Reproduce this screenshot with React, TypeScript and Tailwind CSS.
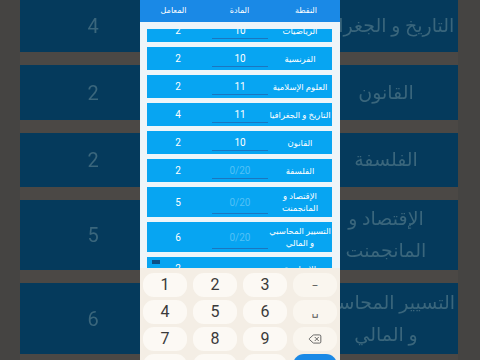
import React from "react";
import { Delete } from "lucide-react";

type Row = { n: string; v: string; s: string[]; ph?: boolean };

const rows: Row[] = [
  { n: "2", v: "10", s: ["الرياضيات"] },
  { n: "2", v: "10", s: ["الفرنسية"] },
  { n: "2", v: "11", s: ["العلوم الإسلامية"] },
  { n: "4", v: "11", s: ["التاريخ و الجغرافيا"] },
  { n: "2", v: "10", s: ["القانون"] },
  { n: "2", v: "0/20", s: ["الفلسفة"], ph: true },
  { n: "5", v: "0/20", s: ["الإقتصاد و", "المانجمنت"], ph: true },
  { n: "6", v: "0/20", s: ["التسيير المحاسبي", "و المالي"], ph: true },
  { n: "2", v: "", s: ["الإنجليزية"], ph: true },
];

const bgRows: { n: string; s: string[]; h: string }[] = [
  { n: "4", s: ["التاريخ و الجغرافيا"], h: "h-[52px]" },
  { n: "2", s: ["القانون"], h: "h-[55px]" },
  { n: "2", s: ["الفلسفة"], h: "h-[54px]" },
  { n: "5", s: ["الإقتصاد و", "المانجمنت"], h: "h-[70px]" },
  { n: "6", s: ["التسيير المحاسبي", "و المالي"], h: "h-[71px]" },
  { n: "2", s: ["الإنجليزية"], h: "h-[55px]" },
];

const font = { fontFamily: "Roboto, 'DejaVu Sans', sans-serif" };

function LeftBg() {
  return (
    <div className="w-[140px] h-[360px] flex bg-[#454442] overflow-hidden">
      <div className="w-[20px] shrink-0" />
      <div className="flex-1 flex flex-col gap-[13px] bg-[#4b4845]">
        {bgRows.map((r, i) => (
          <div key={i} className={`${r.h} shrink-0 bg-[#053a5c] flex items-center pl-[63px]`}>
            <span className="w-[20px] text-center text-[20px] text-[#3a667c] blur-[0.7px]">{r.n}</span>
          </div>
        ))}
      </div>
    </div>
  );
}

function RightBg() {
  return (
    <div className="w-[140px] h-[360px] flex bg-[#454442] overflow-hidden">
      <div className="w-[118px] shrink-0 flex flex-col gap-[13px] bg-[#4b4845]">
        {bgRows.map((r, i) => (
          <div key={i} className={`${r.h} shrink-0 bg-[#053a5c] overflow-hidden flex items-center`}>
            <div className="w-[200px] -ml-[54px] shrink-0 text-center text-[19px] leading-[32px] text-[#3a667c] blur-[0.7px] whitespace-nowrap" dir="rtl">
              {r.s.map((t, j) => (
                <div key={j}>{t}</div>
              ))}
            </div>
          </div>
        ))}
      </div>
      <div className="flex-1" />
    </div>
  );
}

function Card({ r, idx }: { r: Row; idx: number }) {
  const two = r.s.length > 1;
  return (
    <div className={`${two ? "h-[30px]" : "h-[23px]"} shrink-0 bg-[#07a5f2] flex items-center relative`}>
      <div className="w-[62px] text-center text-[10px] text-white">{r.n}</div>
      <div className="ml-[3px] w-[56px] h-full flex flex-col justify-center relative">
        <div className={`text-center text-[10px] ${r.ph ? "text-[#52c1f6]" : "text-white"}`}>{r.v}</div>
        <div className="absolute left-0 right-0 bottom-[3px] h-px bg-[#1b76c0]" />
      </div>
      <div className="flex-1 text-center text-[8.5px] leading-[12px] text-white whitespace-nowrap" dir="rtl">
        {r.s.map((t, j) => (
          <div key={j}>{t}</div>
        ))}
      </div>
      {idx === rows.length - 1 && (
        <div className="absolute left-[5px] top-[3px] w-[8px] h-[4px] bg-[#0b4f86]" />
      )}
    </div>
  );
}

function Key({ children, side }: { children?: React.ReactNode; side?: boolean }) {
  return (
    <div
      className={`h-[24px] rounded-[11px] flex items-center justify-center ${side ? "bg-[#faf6ef]" : "bg-[#fcf9f4]"} text-[16px] text-[#3a3a3a]`}
    >
      {children}
    </div>
  );
}

function Phone() {
  return (
    <div className="w-[200px] h-[360px] flex flex-col bg-[#eef5f9] overflow-hidden">
      <div className="h-[22px] shrink-0 bg-[#1a89e6] flex items-center text-[8px] text-white" dir="rtl">
        <div className="w-[68px] text-center">النقطة</div>
        <div className="w-[65px] text-center">المادة</div>
        <div className="flex-1 text-center">المعامل</div>
      </div>
      <div className="flex-1 mt-[7px] overflow-hidden">
        <div className="-mt-[10px] px-[7px] pr-[8px] flex flex-col gap-[5px]">
          {rows.map((r, i) => (
            <Card key={i} r={r} idx={i} />
          ))}
        </div>
      </div>
      <div className="h-[92px] shrink-0 bg-[#f4eee5] px-[3px] pt-[5px] grid grid-cols-4 gap-x-[6px] gap-y-[3px] content-start">
        <Key>1</Key>
        <Key>2</Key>
        <Key>3</Key>
        <Key side>
          <span className="text-[10px] text-[#555]">–</span>
        </Key>
        <Key>4</Key>
        <Key>5</Key>
        <Key>6</Key>
        <Key side>
          <span className="text-[11px] text-[#555]">␣</span>
        </Key>
        <Key>7</Key>
        <Key>8</Key>
        <Key>9</Key>
        <Key side>
          <Delete size={14} strokeWidth={1.5} color="#555" />
        </Key>
        <Key />
        <Key />
        <Key />
        <div className="h-[24px] rounded-[11px] bg-[#1a89e6]" />
      </div>
    </div>
  );
}

export default function App() {
  return (
    <div className="w-[480px] h-[360px] flex overflow-hidden bg-[#454442]" style={font}>
      <LeftBg />
      <Phone />
      <RightBg />
    </div>
  );
}
